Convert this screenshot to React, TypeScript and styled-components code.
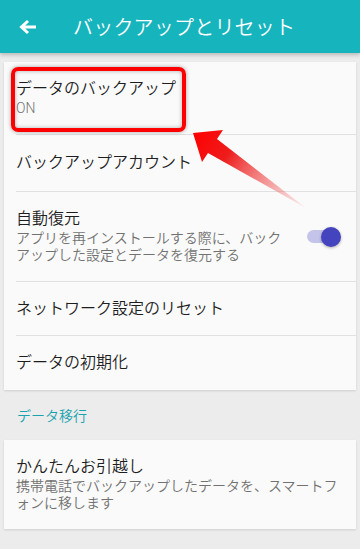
import React from "react";
import styled, { createGlobalStyle } from "styled-components";

const GlobalStyle = createGlobalStyle`
  html, body {
    margin: 0;
    padding: 0;
    background: #ececec;
  }
  * {
    box-sizing: border-box;
  }
`;

const Screen = styled.div`
  position: relative;
  width: 360px;
  height: 549px;
  overflow: hidden;
  background: #ececec;
  font-family: Roboto, "Noto Sans CJK JP", sans-serif;
`;

const Header = styled.header`
  position: relative;
  z-index: 1;
  height: 53px;
  display: flex;
  align-items: center;
  padding-left: 19px;
  background: #16b4bd;
  box-shadow: 0 2px 4px rgba(0, 0, 0, 0.22);
`;

const BackButton = styled.div`
  width: 18px;
  height: 16px;
  display: flex;
`;

const Title = styled.h1`
  margin: 0 0 0 36px;
  font-size: 20px;
  font-weight: 350;
  color: #ffffff;
  letter-spacing: 0.2px;
`;

const Content = styled.div`
  padding: 9px 4px 0;
`;

const Card = styled.section`
  background: #fafafa;
  box-shadow: 0 1px 2px rgba(0, 0, 0, 0.12);
`;

const Row = styled.div<{ $h: number; $last?: boolean }>`
  height: ${(p) => p.$h}px;
  margin-left: 12px;
  padding-right: 12px;
  display: flex;
  align-items: center;
  border-bottom: ${(p) => (p.$last ? "none" : "1px solid #e1e1e1")};
`;

const TextCol = styled.div<{ $w?: number }>`
  display: flex;
  flex-direction: column;
  width: ${(p) => (p.$w ? `${p.$w}px` : "auto")};
`;

const ItemTitle = styled.div`
  font-size: 16px;
  font-weight: 350;
  line-height: 20px;
  color: #1e1e1e;
`;

const ItemSub = styled.div`
  font-size: 14px;
  font-weight: 350;
  line-height: 17px;
  color: #727272;
  margin-top: 1px;
`;

const SectionHeader = styled.div`
  height: 50px;
  display: flex;
  align-items: center;
  padding-left: 13px;
  font-size: 14px;
  font-weight: 350;
  color: #1ba2ae;
`;

const Toggle = styled.div`
  position: relative;
  margin-left: auto;
  margin-right: 3px;
  width: 34px;
  height: 20px;
  display: flex;
  align-items: center;
`;

const Track = styled.div`
  width: 28px;
  height: 13px;
  border-radius: 7px;
  background: #c4c4ea;
`;

const Knob = styled.div`
  position: absolute;
  right: 0;
  top: 0;
  width: 20px;
  height: 20px;
  border-radius: 50%;
  background: #4444bf;
  box-shadow: 0 1px 3px rgba(0, 0, 0, 0.3);
`;

const Highlight = styled.div`
  position: absolute;
  left: 11px;
  top: 67px;
  width: 175px;
  height: 65px;
  border: 4px solid #ff0000;
  border-radius: 7px;
  box-shadow: 0 0 4px rgba(0, 0, 0, 0.35), inset 0 0 4px rgba(0, 0, 0, 0.3);
  pointer-events: none;
`;

const Overlay = styled.svg`
  position: absolute;
  left: 0;
  top: 0;
  pointer-events: none;
`;

const App: React.FC = () => {
  return (
    <Screen>
      <GlobalStyle />
      <Header>
        <BackButton>
          <svg width="18" height="16" viewBox="0 0 18 16">
            <path
              d="M17 8H3M9 2L2.5 8L9 14"
              fill="none"
              stroke="#fff"
              strokeWidth="3"
              strokeLinecap="butt"
              strokeLinejoin="miter"
            />
          </svg>
        </BackButton>
        <Title>バックアップとリセット</Title>
      </Header>
      <Content>
        <Card>
          <Row $h={73}>
            <TextCol>
              <ItemTitle>データのバックアップ</ItemTitle>
              <ItemSub>ON</ItemSub>
            </TextCol>
          </Row>
          <Row $h={57}>
            <ItemTitle>バックアップアカウント</ItemTitle>
          </Row>
          <Row $h={90}>
            <TextCol $w={270}>
              <ItemTitle>自動復元</ItemTitle>
              <ItemSub>
                アプリを再インストールする際に、バックアップした設定とデータを復元する
              </ItemSub>
            </TextCol>
            <Toggle>
              <Track />
              <Knob />
            </Toggle>
          </Row>
          <Row $h={54}>
            <ItemTitle>ネットワーク設定のリセット</ItemTitle>
          </Row>
          <Row $h={54} $last>
            <ItemTitle>データの初期化</ItemTitle>
          </Row>
        </Card>
        <SectionHeader>データ移行</SectionHeader>
        <Card>
          <Row $h={89} $last>
            <TextCol>
              <ItemTitle>かんたんお引越し</ItemTitle>
              <ItemSub>
                携帯電話でバックアップしたデータを、スマートフォンに移します
              </ItemSub>
            </TextCol>
          </Row>
        </Card>
      </Content>
      <Highlight />
      <Overlay width="360" height="549" viewBox="0 0 360 549">
        <defs>
          <linearGradient
            id="arrowFade"
            gradientUnits="userSpaceOnUse"
            x1="193"
            y1="133"
            x2="306"
            y2="208"
          >
            <stop offset="0" stopColor="#ff0000" stopOpacity="1" />
            <stop offset="0.3" stopColor="#ee1c1c" stopOpacity="1" />
            <stop offset="1" stopColor="#f07070" stopOpacity="0.1" />
          </linearGradient>
        </defs>
        <polygon
          points="193,133 223,130 217,139 306,208 208,153 202,162"
          fill="url(#arrowFade)"
        />
      </Overlay>
    </Screen>
  );
};

export default App;
